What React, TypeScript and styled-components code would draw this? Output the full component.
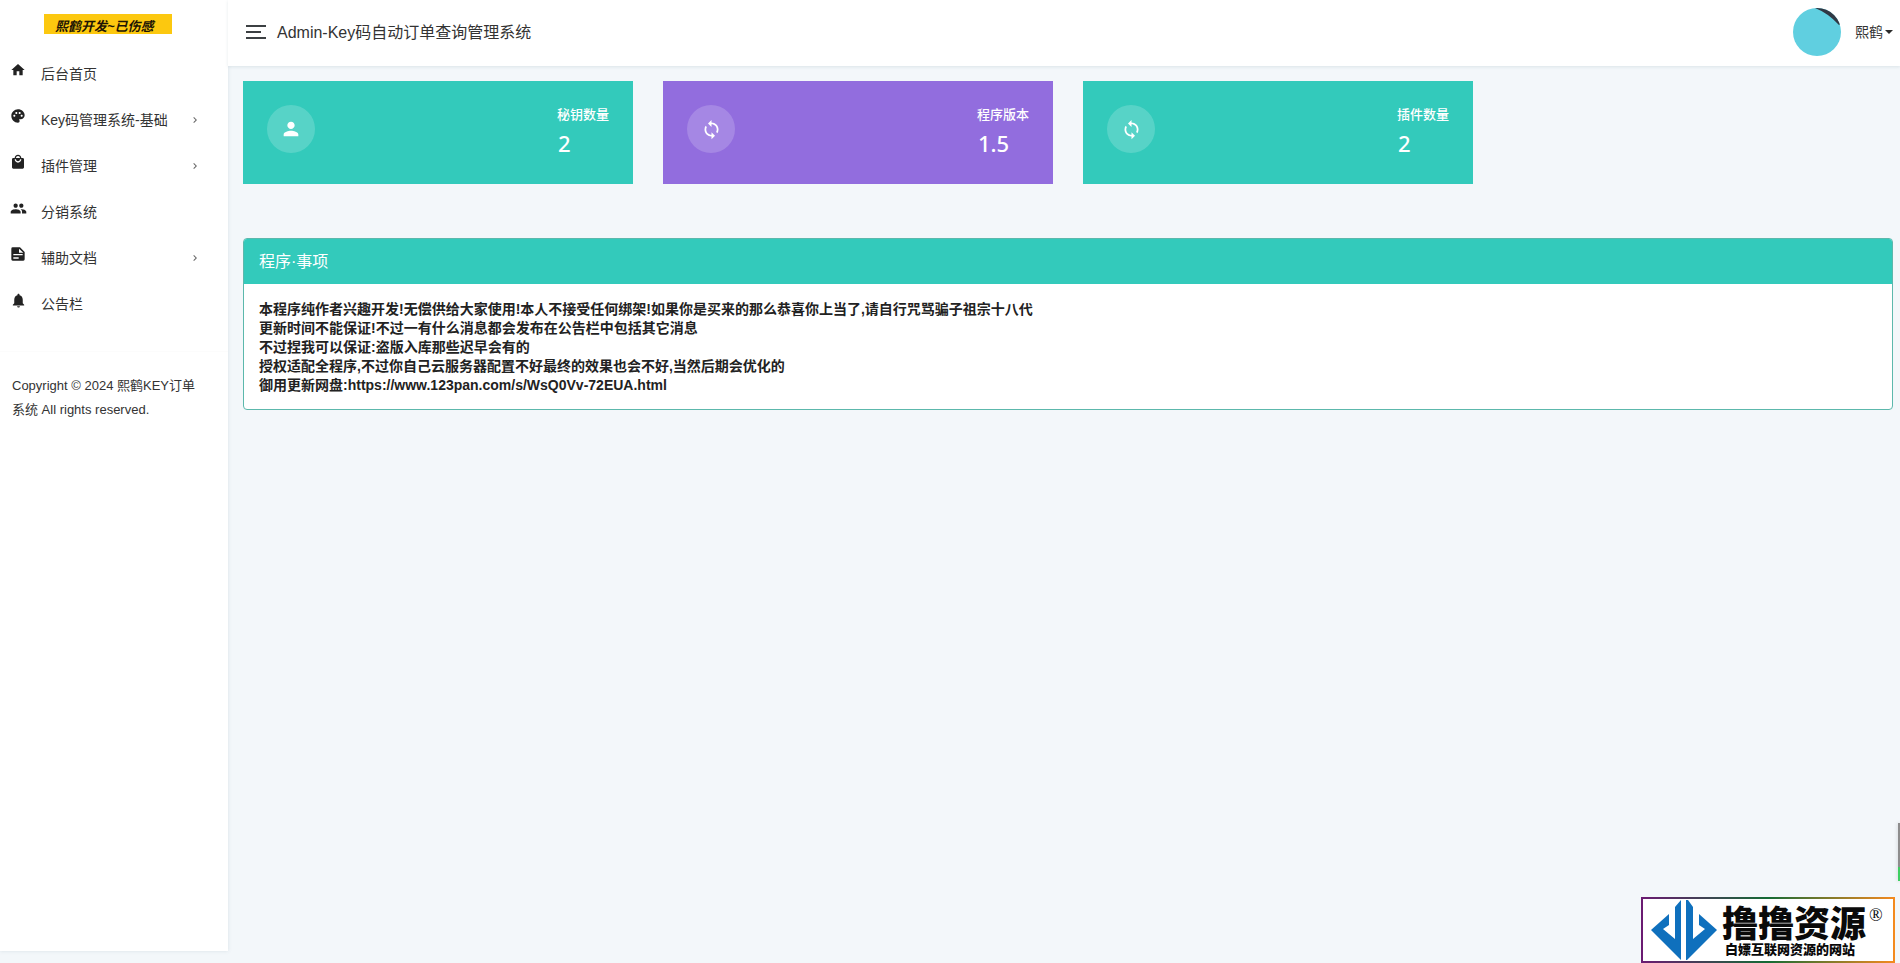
import React from "react";
import styled, { createGlobalStyle } from "styled-components";
import {
  MdHome,
  MdPalette,
  MdLocalMall,
  MdPeople,
  MdNotifications,
  MdPerson,
  MdSync,
  MdChevronRight,
} from "react-icons/md";

const GlobalStyle = createGlobalStyle`
  * { box-sizing: border-box; }
  body {
    margin: 0;
    background: #f3f7fa;
    color: #333;
    font-family: "Liberation Sans", "Noto Sans CJK SC", sans-serif;
    font-size: 14px;
    font-weight: 400;
  }
`;

const Shell = styled.div`
  display: grid;
  grid-template-columns: 228px minmax(0, 1fr);
  min-height: 100vh;
`;

const Sidebar = styled.aside`
  display: flex;
  flex-direction: column;
  margin-bottom: 12px;
  background: #fff;
  box-shadow: 0 0 4px rgba(80, 110, 130, 0.16);
`;

const Brand = styled.a`
  align-self: flex-start;
  width: 128px;
  height: 20px;
  margin: 14px 0 0 44px;
  padding-left: 11px;
  background: #fcc80f;
  color: #1d1404;
  font-size: 13px;
  font-style: italic;
  font-weight: 700;
  line-height: 26px;
  white-space: nowrap;
  text-decoration: none;
  overflow: hidden;
`;

const Nav = styled.nav`
  display: flex;
  flex-direction: column;
  padding: 17px 0 24px;
  border-bottom: 1px solid #fcfcfc;
`;

const NavLink = styled.a`
  display: grid;
  grid-template-columns: 31px 1fr 12px;
  align-items: center;
  height: 46px;
  padding: 0 27px 0 10px;
  color: #333;
  line-height: 20px;
  text-decoration: none;
  > svg:first-child {
    margin-bottom: 8px;
    color: #222;
  }
`;

const Chevron = styled(MdChevronRight)`
  color: #666;
`;

const Copyright = styled.p`
  width: 192px;
  margin: 22px 0 0 12px;
  font-size: 13px;
  line-height: 24px;
`;

const Page = styled.div`
  display: flex;
  flex-direction: column;
`;

const Header = styled.header`
  display: flex;
  align-items: center;
  height: 66px;
  padding: 0 7px 2px 18px;
  background: #fff;
  box-shadow: 0 1px 3px rgba(80, 110, 130, 0.14);
`;

const MenuButton = styled.button`
  display: flex;
  flex-direction: column;
  gap: 4px;
  width: 20px;
  padding: 0;
  border: 0;
  background: none;
`;

const Bar = styled.span<{ $short?: boolean }>`
  width: ${(p) => (p.$short ? 15 : 20)}px;
  height: 2px;
  background: #3c4043;
`;

const Title = styled.h1`
  margin: 0 auto 0 11px;
  padding-top: 2px;
  font-size: 16px;
  font-weight: 400;
  line-height: 24px;
`;

const Account = styled.button`
  display: flex;
  align-items: center;
  padding: 0;
  border: 0;
  background: none;
  color: #333;
  font: inherit;
`;

const AccountName = styled.span`
  margin: 0 2px 0 14px;
  line-height: 20px;
`;

const Caret = styled.span`
  border: 4px solid transparent;
  border-top-color: #2b2b2b;
  border-bottom: 0;
`;

const Main = styled.main`
  padding: 15px 7px 15px 15px;
`;

const Cards = styled.section`
  display: grid;
  grid-template-columns: repeat(4, 1fr);
  gap: 30px;
`;

const Card = styled.article<{ $color: string }>`
  display: flex;
  justify-content: space-between;
  height: 103px;
  padding: 24px;
  background: ${(p) => p.$color};
  color: #fff;
`;

const CardIcon = styled.span`
  display: grid;
  place-items: center;
  width: 48px;
  height: 48px;
  border-radius: 50%;
  background: rgba(255, 255, 255, 0.18);
`;

const CardLabel = styled.p`
  margin: 0;
  font-size: 13px;
  font-weight: 500;
  line-height: 20px;
`;

const CardValue = styled.p`
  margin: 3px 0 0 1px;
  font-family: "Noto Sans", sans-serif;
  font-size: 22px;
  font-weight: 500;
  line-height: 30px;
`;

const Panel = styled.section`
  margin-top: 54px;
  border: 1px solid #5cb8ac;
  border-radius: 4px;
  background: #fff;
  overflow: hidden;
`;

const PanelTitle = styled.h2`
  margin: 0;
  padding: 11px 15px 10px;
  background: #33cabb;
  color: #fff;
  font-size: 16px;
  font-weight: 400;
  line-height: 24px;
`;

const Notes = styled.div`
  padding: 16px 15px 14px;
  color: #222;
  font-weight: 700;
  line-height: 19px;
  p {
    margin: 0;
  }
`;

const Watermark = styled.aside`
  position: fixed;
  right: 5px;
  bottom: 0;
  display: flex;
  width: 254px;
  height: 66px;
  padding-left: 8px;
  border: 2px solid transparent;
  background: linear-gradient(#fff, #fff) padding-box,
    linear-gradient(90deg, #6b1a72, #146b35 50%, #f58a1f) border-box;
  color: #0a0a0a;
`;

const WatermarkText = styled.div`
  padding: 8px 0 0 5px;
  font-weight: 900;
  white-space: nowrap;
`;

const WatermarkName = styled.div`
  font-size: 36px;
  line-height: 36px;
`;

const WatermarkLine = styled.div`
  padding-left: 3px;
  font-size: 13px;
  line-height: 14px;
`;

const Registered = styled.span`
  padding: 7px 0 0 3px;
  font-family: "Liberation Serif", serif;
  font-size: 18px;
  font-weight: 400;
  line-height: 18px;
`;

const EdgeTab = styled.div`
  position: fixed;
  right: 0;
  bottom: 82px;
  width: 2px;
  height: 58px;
  background: linear-gradient(#8d8d8d 44px, #3ecf62 44px);
  box-shadow: 0 0 4px rgba(0, 0, 0, 0.2);
`;

const DocIcon = () => (
  <svg width="16" height="16" viewBox="0 0 24 24" aria-hidden="true">
    <path
      fill="currentColor"
      fillRule="evenodd"
      d="M4 2h11l7 7v11a2 2 0 0 1-2 2H4a2 2 0 0 1-2-2V4a2 2 0 0 1 2-2zM13.500 4v6H20zM5 12v2h14v-2zM5 17v2h8v-2z"
    />
  </svg>
);

const Avatar = () => (
  <svg width="48" height="48" viewBox="0 0 48 48" aria-hidden="true">
    <defs>
      <clipPath id="avatar">
        <circle cx="24" cy="24" r="24" />
      </clipPath>
    </defs>
    <g clipPath="url(#avatar)">
      <rect width="48" height="48" fill="#60cfe0" />
      <path d="M22 0Q35 5 46 17L48 16V0Z" fill="#303844" />
    </g>
  </svg>
);

const Emblem = () => (
  <svg width="66" height="62" viewBox="0 0 66 62" aria-hidden="true">
    <g fill="#0f70bd">
      <path d="M24 8L30 1V61L0 31L18 15V26L12 30L24 40Z" />
      <path d="M35 1H37L42 8V40L54 30L48 26V15L66 31L36 61H35Z" />
    </g>
  </svg>
);

const links = [
  { text: "后台首页", icon: <MdHome size={16} /> },
  { text: "Key码管理系统-基础", icon: <MdPalette size={16} />, more: true },
  { text: "插件管理", icon: <MdLocalMall size={16} />, more: true },
  { text: "分销系统", icon: <MdPeople size={17} /> },
  { text: "辅助文档", icon: <DocIcon />, more: true },
  { text: "公告栏", icon: <MdNotifications size={17} /> },
];

const cards = [
  { label: "秘钥数量", value: "2", color: "#33cabb", icon: <MdPerson size={22} /> },
  { label: "程序版本", value: "1.5", color: "#926dde", icon: <MdSync size={21} /> },
  { label: "插件数量", value: "2", color: "#33cabb", icon: <MdSync size={21} /> },
];

const notes = [
  "本程序纯作者兴趣开发!无偿供给大家使用!本人不接受任何绑架!如果你是买来的那么恭喜你上当了,请自行咒骂骗子祖宗十八代",
  "更新时间不能保证!不过一有什么消息都会发布在公告栏中包括其它消息",
  "不过捏我可以保证:盗版入库那些迟早会有的",
  "授权适配全程序,不过你自己云服务器配置不好最终的效果也会不好,当然后期会优化的",
  "御用更新网盘:https://www.123pan.com/s/WsQ0Vv-72EUA.html",
];

export default function App() {
  return (
    <>
      <GlobalStyle />
      <Shell>
        <Sidebar>
          <Brand href="#">熙鹤开发~已伤感</Brand>
          <Nav>
            {links.map((l) => (
              <NavLink href="#" key={l.text}>
                {l.icon}
                <span>{l.text}</span>
                {l.more && <Chevron size={12} />}
              </NavLink>
            ))}
          </Nav>
          <Copyright>Copyright © 2024 熙鹤KEY订单系统 All rights reserved.</Copyright>
        </Sidebar>
        <Page>
          <Header>
            <MenuButton aria-label="菜单">
              <Bar />
              <Bar $short />
              <Bar />
            </MenuButton>
            <Title>Admin-Key码自动订单查询管理系统</Title>
            <Account>
              <Avatar />
              <AccountName>熙鹤</AccountName>
              <Caret />
            </Account>
          </Header>
          <Main>
            <Cards>
              {cards.map((c) => (
                <Card key={c.label} $color={c.color}>
                  <CardIcon>{c.icon}</CardIcon>
                  <div>
                    <CardLabel>{c.label}</CardLabel>
                    <CardValue>{c.value}</CardValue>
                  </div>
                </Card>
              ))}
            </Cards>
            <Panel>
              <PanelTitle>程序·事项</PanelTitle>
              <Notes>
                {notes.map((n) => (
                  <p key={n}>{n}</p>
                ))}
              </Notes>
            </Panel>
          </Main>
        </Page>
      </Shell>
      <EdgeTab />
      <Watermark>
        <Emblem />
        <WatermarkText>
          <WatermarkName>撸撸资源</WatermarkName>
          <WatermarkLine>白嫖互联网资源的网站</WatermarkLine>
        </WatermarkText>
        <Registered>®</Registered>
      </Watermark>
    </>
  );
}
